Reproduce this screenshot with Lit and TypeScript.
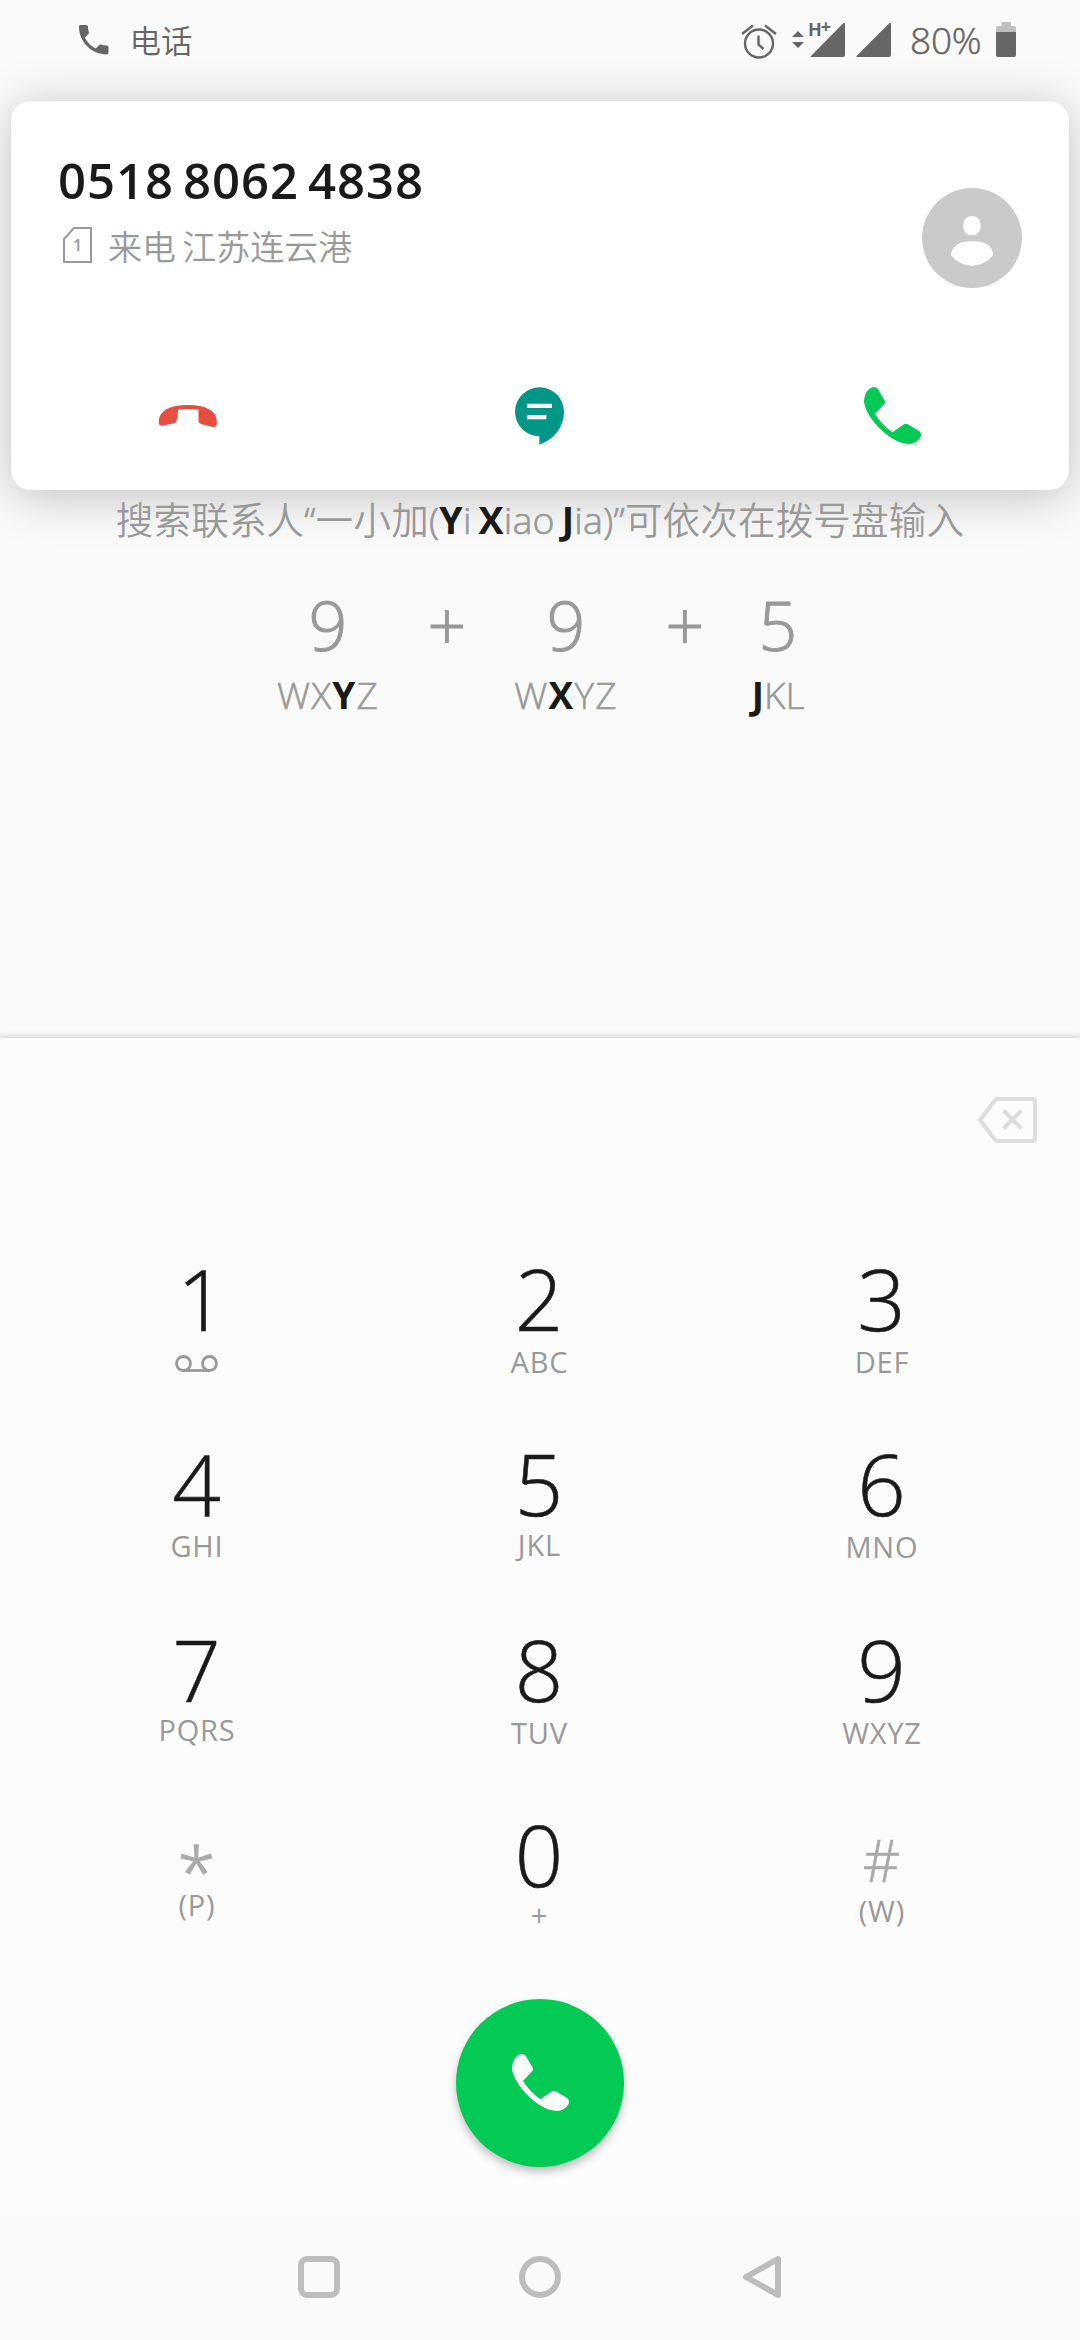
import { LitElement, html, css, svg } from "lit";
import { customElement } from "lit/decorators.js";
import { classMap } from "lit/directives/class-map.js";

const handset = svg`<path d="M30 0Q37 0 41 5L62 41Q65 46 61 51L33 81Q54 114 85 136L118 113Q126 108 134 113L165 132Q175 140 169 151Q158 171 134 171Q102 171 62 138C28 110 4 73 0 45C0 20 14 1 30 0Z"/>`;

interface Key {
  main: string;
  sub: string;
  kind?: string;
}

const KEYS: Key[] = [
  { main: "1", sub: "", kind: "voicemail" },
  { main: "2", sub: "ABC" },
  { main: "3", sub: "DEF" },
  { main: "4", sub: "GHI", kind: "mid" },
  { main: "5", sub: "JKL", kind: "raised" },
  { main: "6", sub: "MNO" },
  { main: "7", sub: "PQRS", kind: "raised" },
  { main: "8", sub: "TUV" },
  { main: "9", sub: "WXYZ" },
  { main: "*", sub: "(P)", kind: "star" },
  { main: "0", sub: "+", kind: "zero" },
  { main: "#", sub: "(W)", kind: "hash" },
];

@customElement("status-bar")
export class StatusBar extends LitElement {
  static styles = css`
    :host {
      display: flex;
      align-items: flex-start;
      height: 101px;
      box-sizing: border-box;
      padding: 20px 64px 0 74px;
      color: #666;
      fill: #666;
    }
    svg { display: block; flex: none; overflow: visible; }
    .app { margin-left: 16px; font-size: 31.5px; line-height: 42px; font-weight: 350; flex: 1; }
    .alarm { margin: 3px 15px 0 0; }
    .signal { margin-top: 2px; }
    .signal2 { margin: 2px 19px 0 11px; }
    .battery { margin-top: 2px; }
    .pct { font-size: 37px; line-height: 40px; font-weight: 300; -webkit-text-stroke: 0.5px #666; width: 75px; white-space: nowrap; letter-spacing: -0.2px; margin-right: 11px; }
    .tech { font: 700 18px "Open Sans", sans-serif; }
  `;
  render() {
    return html`
      <svg width="39.4" height="39.4" viewBox="0 0 24 24"><path d="M6.62 10.79c1.44 2.83 3.76 5.14 6.59 6.59l2.2-2.2c.27-.27.67-.36 1.02-.24 1.12.37 2.33.57 3.57.57.55 0 1 .45 1 1V20c0 .55-.45 1-1 1-9.39 0-17-7.61-17-17 0-.55.45-1 1-1h3.5c.55 0 1 .45 1 1 0 1.25.2 2.45.57 3.57.11.35.03.74-.25 1.02l-2.2 2.2z"/></svg>
      <span class="app">电话</span>
      <svg class="alarm" width="36" height="36" viewBox="0 0 36 36" fill="none" stroke="#666" stroke-width="2.4"><circle cx="18" cy="20.5" r="14" fill="none"/><path fill="none" d="M1 11L12 2.5M24 2.5L35 11M17.5 12.5V21.5L22.5 26"/></svg>
      <svg class="signal" width="53" height="36" viewBox="0 0 53 36"><path d="M0 15L6 9L12 15ZM0 20H12L6 26Z"/><path d="M18 35L51 1.5Q53 0 53 2V33Q53 35 51 35H19.500Q17.500 35 18.500 34Z"/><text class="tech" x="16" y="14">H<tspan dx="-1" dy="-3">+</tspan></text></svg>
      <svg class="signal2" width="35" height="36" viewBox="0 0 35 36"><path d="M.5 34L33 1.500Q35 0 35 2V33Q35 35 33 35H1.500Q-.5 35 .5 34Z"/></svg>
      <span class="pct">80%</span>
      <svg class="battery" width="20" height="35" viewBox="0 0 20 35"><path fill="#bfbfbf" d="M5.500 0H15V4H18Q20 4 20 6V10H0V6Q0 4 2 4H5.500Z"/><path d="M0 10H20V33Q20 35 18 35H2Q0 35 0 33Z"/></svg>
    `;
  }
}

@customElement("incoming-call-card")
export class IncomingCallCard extends LitElement {
  static styles = css`
    :host {
      display: flex;
      flex-direction: column;
      justify-content: space-between;
      height: 389px;
      margin: 0 11px;
      box-sizing: border-box;
      background: #fff;
      border-radius: 20px;
      box-shadow: 0 6px 50px rgba(0, 0, 0, 0.23);
    }
    svg { display: block; flex: none; }
    .top { display: flex; justify-content: space-between; padding: 47px 47px 0 47px; }
    .number { font-size: 49px; line-height: 64px; font-weight: 600; color: #1a1a1a; letter-spacing: 1px; word-spacing: -4.8px; white-space: nowrap; }
    .origin { display: flex; align-items: flex-start; font-size: 34px; line-height: 46px; font-weight: 350; color: #999; margin-top: 12px; }
    .origin span { margin-left: 16px; word-spacing: -2.5px; }
    .sim { margin: 3px 0 0 5px; }
    .one { font: 600 16px "Open Sans", sans-serif; }
    .avatar { margin-top: 40px; }
    .actions { display: grid; grid-template-columns: 353px 351px 1fr; height: 149px; }
    .action { display: grid; place-items: center; }
    .decline { padding-top: 1px; }
  `;
  render() {
    return html`
      <div class="top">
        <div>
          <div class="number">0518 8062 4838</div>
          <div class="origin">
            <svg class="sim" width="29" height="36" viewBox="0 0 29 36"><path fill="none" stroke="#999" stroke-width="2" d="M1 35V12L11 1H28V35Z"/><text class="one" x="14.500" y="24" text-anchor="middle" fill="#999">1</text></svg>
            <span>来电 江苏连云港</span>
          </div>
        </div>
        <svg class="avatar" width="100" height="100" viewBox="666 563 300 300"><circle cx="816" cy="713" r="150" fill="#cacaca"/><path fill="#fff" d="M816 647C833 647 842 659 842 676S833 705 816 705S790 693 790 676S799 647 816 647ZM816 723C858 723 876 736 880 764Q853 796 816 796T752 764C758 736 776 723 816 723Z"/></svg>
      </div>
      <div class="actions">
        <div class="action decline"><svg width="59" height="22" viewBox="0 0 176 66" fill="#e84e40"><path d="M2 44Q5 24 26 12Q48 0 89 0Q131 0 151 12Q176 24 176 49V55Q176 68 164 66L131 58Q121 55 121 48V14Q90 10 60 14L56 44Q55 52 46 55L14 62Q0 63 2 50Z"/></svg></div>
        <div class="action"><svg width="49" height="58" viewBox="0 0 147 172"><path fill="#009688" d="M73.500 0A73.500 73.500 0 0 1 147 73.500C147 119 117 157 73 172V146.500A73.250 73.250 0 0 1 73.500 0Z"/><path fill="#fff" d="M36 49H111V62H36ZM36 83H94V96H36Z"/></svg></div>
        <div class="action"><svg width="57" height="57" viewBox="0 0 171 171" fill="#03ca54">${handset}</svg></div>
      </div>
    `;
  }
}

@customElement("dial-hint")
export class DialHint extends LitElement {
  static styles = css`
    :host { display: flex; flex-direction: column; align-items: center; height: 548px; box-sizing: border-box; padding-top: 5px; color: #999; font-weight: 350; }
    b { color: #1a1a1a; font-weight: 700; -webkit-text-stroke: 0; }
    .sentence { font-size: 37.5px; line-height: 50px; letter-spacing: 0.2px; word-spacing: -3px; white-space: nowrap; }
    .pinyin { -webkit-text-stroke: 0.7px #999; }
    .example { display: flex; margin-top: 45px; }
    .group { display: flex; flex-direction: column; align-items: center; width: 104px; }
    .group.narrow { width: 52px; }
    .digit, .plus { font-size: 68px; line-height: 70px; -webkit-text-stroke: 1px #999; }
    .plus { width: 34px; margin: 0 50px 0; display: flex; justify-content: center; }
    .letters { font-size: 37px; line-height: 40px; margin-top: 15px; letter-spacing: 1.2px; white-space: nowrap; -webkit-text-stroke: 0.6px #999; }
    .narrow .letters { letter-spacing: 0; }
  `;
  render() {
    return html`
      <div class="sentence">搜索联系人<span class="pinyin">“</span>一小加<span class="pinyin">(<b>Y</b>i <b>X</b>iao <b>J</b>ia)”</span>可依次在拨号盘输入</div>
      <div class="example">
        <div class="group"><span class="digit">9</span><span class="letters">WX<b>Y</b>Z</span></div>
        <span class="plus">+</span>
        <div class="group"><span class="digit">9</span><span class="letters">W<b>X</b>YZ</span></div>
        <span class="plus">+</span>
        <div class="group narrow"><span class="digit">5</span><span class="letters"><b>J</b>KL</span></div>
      </div>
    `;
  }
}

@customElement("dial-pad")
export class DialPad extends LitElement {
  static styles = css`
    :host { display: flex; flex-direction: column; align-items: center; height: 1176px; box-sizing: border-box; background: #fcfcfc; box-shadow: 0 -1px 7px rgba(0, 0, 0, 0.2); }
    svg { display: block; flex: none; }
    .entry { display: flex; justify-content: flex-end; width: 100%; height: 219.5px; box-sizing: border-box; padding: 59px 43px 0 0; }
    .keys { display: grid; grid-template-columns: repeat(3, 342.5px); grid-auto-rows: 185.6px; margin-right: 2px; }
    .key { display: flex; flex-direction: column; align-items: center; }
    .main { font-size: 85px; line-height: 80px; font-weight: 300; color: #1a1a1a; -webkit-text-stroke: 0.6px currentColor; }
    .voicemail .main { padding-left: 10px; }
    .sub { font-size: 29px; line-height: 30px; color: #999; margin-top: 9px; letter-spacing: 0.8px; margin-right: -0.8px; }
    .mid .sub { margin-top: 7.5px; }
    .raised .sub { margin-top: 6.5px; }
    .star .main, .hash .main { color: #aaa; line-height: 80px; }
    .star .main { font-size: 68px; padding-top: 17px; -webkit-text-stroke-width: 1.4px; }
    .hash .main { font-size: 58px; padding-top: 6px; }
    .star .sub { margin-top: -21.5px; }
    .zero .sub { margin-top: 6px; }
    .hash .sub { margin-top: -4.5px; }
    .tape { margin-top: 17.5px; }
    .fab { display: grid; place-items: center; width: 168px; height: 168px; border-radius: 50%; background: #03ca54; box-shadow: 0 5px 9px rgba(0, 0, 0, 0.24); margin-top: -0.9px; }
  `;
  render() {
    return html`
      <div class="entry">
        <svg width="59" height="46" viewBox="0 0 59 46" fill="none" stroke="#ddd" stroke-width="4" stroke-linejoin="round"><path d="M18 2H55Q57 2 57 4V42Q57 44 55 44H18L2 23Z"/><path d="M25.500 13.500L43.500 31.500M43.500 13.500L25.500 31.500"/></svg>
      </div>
      <div class="keys">
        ${KEYS.map(
          (k) => html`<div class=${classMap({ key: true, [k.kind ?? "plain"]: true })}>
            <span class="main">${k.main}</span>
            ${k.kind === "voicemail"
              ? html`<svg class="tape" width="43" height="17" viewBox="0 0 43 17" fill="none" stroke="#999" stroke-width="2.8"><circle cx="8.500" cy="8.500" r="7"/><circle cx="34.500" cy="8.500" r="7"/><path d="M8.500 15.500H34.500"/></svg>`
              : html`<span class="sub">${k.sub}</span>`}
          </div>`
        )}
      </div>
      <div class="fab"><svg width="57" height="57" viewBox="0 0 171 171" fill="#fff">${handset}</svg></div>
    `;
  }
}

@customElement("nav-bar")
export class NavBar extends LitElement {
  static styles = css`
    :host { display: flex; justify-content: center; gap: 179px; height: 126px; box-sizing: border-box; padding-top: 42px; background: #fafafa; }
    svg { display: block; flex: none; }
  `;
  render() {
    return html`
      <svg width="42" height="42" viewBox="0 0 42 42" fill="none" stroke="#bdbdbd" stroke-width="6"><rect x="3" y="3" width="36" height="36" rx="6"/></svg>
      <svg width="42" height="42" viewBox="0 0 42 42" fill="none" stroke="#bdbdbd" stroke-width="6"><circle cx="21" cy="21" r="18"/></svg>
      <svg width="42" height="42" viewBox="0 0 42 42" fill="none" stroke="#bdbdbd" stroke-width="6" stroke-linejoin="round"><path d="M38 3V39L6 21Z"/></svg>
    `;
  }
}

@customElement("app-root")
export class AppRoot extends LitElement {
  static styles = css`
    :host { display: block; width: 1080px; height: 2340px; overflow: hidden; background: #fafafa; font-family: "Open Sans", "Noto Sans CJK SC", sans-serif; }
  `;
  render() {
    return html`
      <status-bar></status-bar>
      <incoming-call-card></incoming-call-card>
      <dial-hint></dial-hint>
      <dial-pad></dial-pad>
      <nav-bar></nav-bar>
    `;
  }
}
